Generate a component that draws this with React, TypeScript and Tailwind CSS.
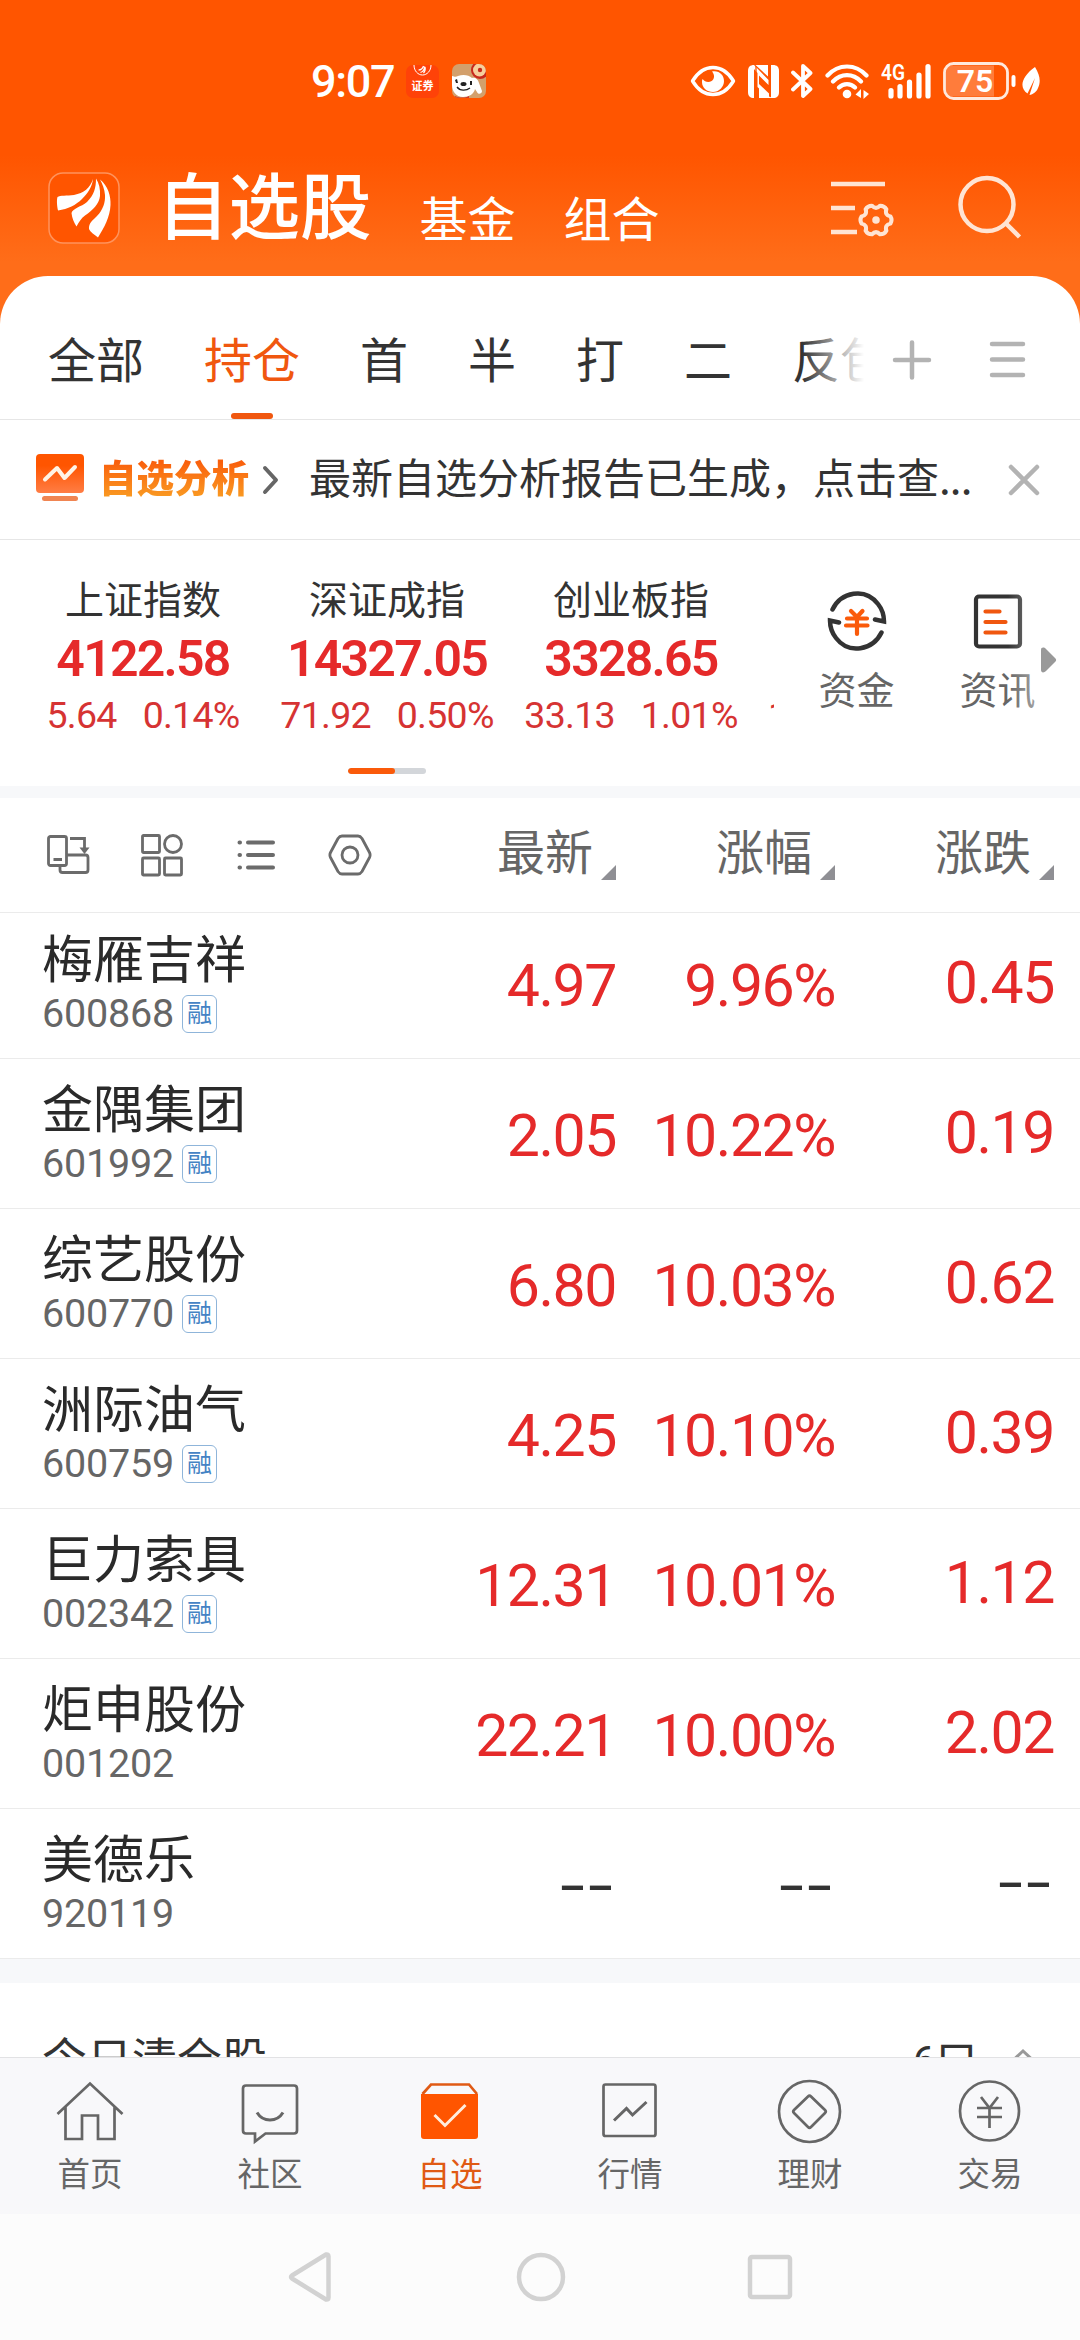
import type { ReactNode } from 'react'

const tabs = ['全部', '持仓', '首', '半', '打', '二', '反包']

const indices = [
    { name: '上证指数', value: '4122.58', change: '5.64', percent: '0.14%' },
    { name: '深证成指', value: '14327.05', change: '71.92', percent: '0.50%' },
    { name: '创业板指', value: '3328.65', change: '33.13', percent: '1.01%' },
]

const stocks = [
    { name: '梅雁吉祥', code: '600868', margin: true, price: '4.97', percent: '9.96%', change: '0.45' },
    { name: '金隅集团', code: '601992', margin: true, price: '2.05', percent: '10.22%', change: '0.19' },
    { name: '综艺股份', code: '600770', margin: true, price: '6.80', percent: '10.03%', change: '0.62' },
    { name: '洲际油气', code: '600759', margin: true, price: '4.25', percent: '10.10%', change: '0.39' },
    { name: '巨力索具', code: '002342', margin: true, price: '12.31', percent: '10.01%', change: '1.12' },
    { name: '炬申股份', code: '001202', margin: false, price: '22.21', percent: '10.00%', change: '2.02' },
    { name: '美德乐', code: '920119', margin: false, price: '--', percent: '--', change: '--' },
]

const StatusBar = () => (
    <div className="flex h-[162px] items-center pl-[311px] pr-10 text-white">
        <span className="w-[83px] font-['Roboto'] text-[45px] leading-none font-medium tracking-[-0.03em]">9:07</span>

        <svg width="33" height="33" viewBox="0 0 33 33" className="ml-3">
            <rect width="33" height="33" rx="7" fill="#ff4208" />
            <path d="M8 0c0 6 4 10 8.500 10S25 6 25 0" fill="none" stroke="#fff" strokeWidth="1" />
            <path d="M12.500 5c2 0 4-1 5-4M14.500 7.500c3-1 4-3 4-6M17.500 8c2-2 2-4 1.500-6" fill="none" stroke="#fff" strokeWidth="1.200" />
            <text x="16.500" y="24.500" textAnchor="middle" fontSize="11" fontWeight="700" fill="#fff" fontFamily="'Noto Sans CJK SC', sans-serif">证券</text>
        </svg>

        <svg width="34" height="34" viewBox="0 0 34 34" className="ml-[13px]">
            <defs>
                <clipPath id="dogClip"><rect width="34" height="34" rx="7" /></clipPath>
            </defs>
            <g clipPath="url(#dogClip)">
                <rect width="34" height="34" fill="#d3a06c" />
                <circle cx="28" cy="6" r="9" fill="#c8281c" />
                <circle cx="27.500" cy="6" r="6.500" fill="#f6cf9c" />
                <circle cx="28" cy="6" r="2.200" fill="#c8281c" />
                <path d="M0 12c3 1 4 1 6 0 5-2 11-1 14 2 3-1 6 1 7 5l3 8c0 3-4 4-5 1l-2-3c-1 5-6 8-12 8C4 33 0 27 0 21z" fill="#fff" />
                <path d="M3 16l2-1 1 4-2 0zM18 17l2 0 0 4-2 0z" fill="#222" />
                <ellipse cx="11.500" cy="20" rx="3" ry="2" fill="#222" />
                <path d="M5 23c3 4 9 4 13 1" fill="none" stroke="#222" strokeWidth="1.300" />
                <path d="M3 32c5 2 10 2 14 0v2H3z" fill="#d0372a" />
            </g>
        </svg>

        <div className="ml-auto flex items-center gap-3">
            <svg width="46" height="34" viewBox="0 0 46 34">
                <path d="M2.500 17C8 8 15 3.500 23 3.500S38 8 43.500 17C38 26 31 30.500 23 30.500S8 26 2.500 17z" fill="none" stroke="#fff" strokeWidth="3.400" strokeLinejoin="round" />
                <path d="M22 7.500c7-1.500 12 3.500 12 9.500S29 28 23 28s-11-4-11-10c0-1 0-2 .6-3 2 3 6 4 9 2s3.400-6 .4-9.500z" fill="#fff" />
            </svg>

            <svg width="31" height="33" viewBox="0 0 31 33" fill="#fff">
                <path d="M6 0v33C2 33 0 31 0 27V6C0 2 2 0 6 0z" />
                <path d="M7.500 0H20v11.500zM11 33h12.500L11 21.500z" />
                <path d="M6 0l14.500 15v5L11 10.500V19l10 9.500V33h2V0h2c4 0 6 2 6 6v21c0 4-2 6-6 6h-4L9.500 22V8L6 4z" fillRule="evenodd" />
                <path d="M8 1v31M22 1v31" stroke="#ff5500" strokeWidth="1.300" />
            </svg>

            <svg width="22" height="36" viewBox="0 0 22 36" fill="none" stroke="#fff" strokeWidth="3.800" strokeLinecap="round" strokeLinejoin="round">
                <path d="M2 9.500L19.500 26 12 33V3l7.500 7L2 26.500" />
            </svg>

            <svg width="44" height="36" viewBox="0 0 44 36" fill="none" stroke="#fff" strokeWidth="4.200" strokeLinecap="round">
                <path d="M2.500 12.500c11-12 28-12 39 0M8 18.500c8-8.500 20-8.500 28 0M14 24.500c4.500-4.500 11.500-4.500 16 0" />
                <circle cx="22" cy="31" r="4.300" fill="#fff" stroke="none" />
                <path d="M30.500 31.500l5.500-5.500v9zM44 31l-5.500 5v-9z" fill="#fff" stroke="none" />
            </svg>

            <svg width="50" height="36" viewBox="0 0 50 36">
                <text x="0" y="17" fontSize="22" fontWeight="600" fill="#fff" fontFamily="Roboto, sans-serif" textLength="24" lengthAdjust="spacingAndGlyphs">4G</text>
                <path d="M10 27.500v5.500M19 23.500v9.500M28.500 19v14M38 12v21M47 3.500v29.500" stroke="#fff" strokeWidth="5.200" strokeLinecap="round" />
            </svg>

            <svg width="97" height="38" viewBox="0 0 97 38">
                <path d="M10 3.500h41v31H10c-4.500 0-7-2.500-7-7v-17c0-4.500 2.500-7 7-7z" fill="#fff" fillOpacity=".23" />
                <rect x="1.500" y="1.500" width="63" height="35" rx="9" fill="none" stroke="#ffe9dd" strokeWidth="2.800" />
                <path d="M70.500 15v8" stroke="#fff" strokeWidth="4" strokeLinecap="round" />
                <text x="32" y="30.300" textAnchor="middle" fontSize="32" fontWeight="600" fill="#fff" fontFamily="Roboto, sans-serif">75</text>
                <path d="M92 5c5 8 6 15 3 21-1.500 4-5 6.500-8.500 7l5.500-17-7.500 15.500C76 26 78 15 92 5z" fill="#fff" />
            </svg>
        </div>
    </div>
)

const TitleBar = () => (
    <div className="flex h-[162px] items-start pl-12 pr-[56px] text-white">
        <svg width="72" height="72" viewBox="0 0 72 72" className="mt-[10px]">
            <rect x="1" y="1" width="70" height="70" rx="14" fill="#ff5500" stroke="#ff935c" strokeWidth="1.500" />
            <g fill="#fff">
                <path d="M45 7C42 16 36 21 26 23C19 24 12 23 9.500 25C8.500 28 9 34 10 38.500C20 37 28 33 34 27C40 21 44 15 45 7Z" />
                <path d="M48 6.500C48 16 46 23 39 30C33 35 25 36 23.500 41C24 46 26 51 28.500 54.500C31 50 33 46.500 37 43.500C45 38 51 32 52 24C52.500 17 51 11 48 6.500Z" />
                <path d="M52 7.500C60 14 63 24 62.500 33C62 45 56 56 50 65.500C47 63 42 60 41 57C40.500 51 45 48 49 44C55 38 57.500 30 57 23C56.500 17 54.500 12 52 7.500Z" />
            </g>
        </svg>
        <h1 className="mt-[5px] ml-[37px] text-[71.500px] leading-none font-medium">自选股</h1>
        <span className="mt-[30px] ml-[48px] text-5xl leading-none">基金</span>
        <span className="mt-[30px] ml-12 text-5xl leading-none">组合</span>

        <svg width="64" height="60" viewBox="0 0 64 60" className="mt-[18px] ml-auto" fill="none" stroke="#ffe4d3" strokeWidth="4.500">
            <path d="M0 4h54M0 28h24M0 52h26" />
            <g transform="translate(45 40) scale(.9)">
                <path
                    d="M16 -4Q9.500 -5.500 11.500 -11.900Q9.250 -16 4.500 -15.900Q0 -11 -4.500 -15.900Q-9.250 -16 -11.500 -11.900Q-9.500 -5.500 -16 -4Q-18.500 0 -16 4Q-9.500 5.500 -11.500 11.900Q-9.250 16 -4.500 15.900Q0 11 4.500 15.900Q9.250 16 11.500 11.900Q9.500 5.500 16 4Q18.500 0 16 -4Z"
                    strokeLinejoin="round"
                />
                <circle r="4.200" fill="#ffe4d3" stroke="none" />
            </g>
        </svg>
        <svg width="66" height="66" viewBox="0 0 66 66" className="mt-[13px] ml-[63px]" fill="none" stroke="#ffe4d3" strokeWidth="4.500">
            <circle cx="29" cy="29.500" r="26.500" />
            <path d="M48 48.500L61.500 62" />
        </svg>
    </div>
)

const GroupTabs = () => (
    <div className="flex h-36 border-b border-[#e6e6e6]">
        <div className="relative flex w-[864px] gap-[60px] overflow-hidden pt-[57px] pl-12 whitespace-nowrap">
            {tabs.map((tab, i) => (
                <div key={tab} className="flex shrink-0 flex-col items-center">
                    <span className={`text-5xl leading-none ${i === 1 ? 'text-[#f0570f]' : 'text-[#333]'}`}>{tab}</span>
                    {i === 1 && <span className="mt-8 h-[6px] w-[42px] rounded-full bg-[#f0570f]" />}
                </div>
            ))}
            <div className="absolute inset-y-0 right-0 w-[62px] bg-gradient-to-r from-white/0 to-white" />
        </div>
        <svg width="40" height="40" viewBox="0 0 40 40" className="mt-[64px] ml-7" stroke="#b3b3b3" strokeWidth="4.500" strokeLinecap="round">
            <path d="M3 20h34M20 2.500v35" />
        </svg>
        <svg width="38" height="40" viewBox="0 0 38 40" className="mt-[63px] ml-[57px]" stroke="#b3b3b3" strokeWidth="4.500" strokeLinecap="round">
            <path d="M3 5h31M3 20.500h31M3 36h31" />
        </svg>
    </div>
)

const ReportBar = () => (
    <div className="flex h-[120px] items-center border-b border-[#e6e6e6] pl-9">
        <svg width="48" height="48" viewBox="0 0 48 48" className="mb-1">
            <defs>
                <linearGradient id="reportFill" x1="0" y1="0" x2="0" y2="1">
                    <stop offset=".3" stopColor="#ff5500" />
                    <stop offset="1" stopColor="#ff7d45" />
                </linearGradient>
            </defs>
            <rect width="48" height="39" rx="4" fill="url(#reportFill)" />
            <path d="M9 25.500l12-11.500 7.500 10L39 13" fill="none" stroke="#fff4e6" strokeWidth="4" strokeLinecap="round" strokeLinejoin="round" />
            <rect x="6" y="42" width="36" height="5" rx="2.500" fill="#f08552" />
        </svg>
        <span className="mb-2 ml-[15px] bg-gradient-to-b from-[#f95f0c] from-20% to-[#f99a22] bg-clip-text text-[37.500px] leading-[1.2] font-black text-transparent">
            自选分析
        </span>
        <svg width="18" height="30" viewBox="0 0 18 30" className="ml-[13px]" fill="none" stroke="#666" strokeWidth="4" strokeLinecap="round" strokeLinejoin="round">
            <path d="M3 3l11 12L3 27" />
        </svg>
        <p className="mb-2 ml-[29px] text-[42px] leading-none whitespace-nowrap text-[#333]">
            最新自选分析报告已生成，点击查<span className="tracking-[-0.02em]">...</span>
        </p>
        <svg width="32" height="32" viewBox="0 0 32 32" className="mr-10 ml-auto" stroke="#b3b3b3" strokeWidth="4.500" strokeLinecap="round">
            <path d="M3 3l26 26M29 3L3 29" />
        </svg>
    </div>
)

const IndexPanel = () => (
    <div className="flex h-[246px]">
        <div className="w-[774px] overflow-hidden pt-[38px]">
            <div className="flex pl-[21px]">
                {indices.map(item => (
                    <div key={item.name} className="flex w-[244px] shrink-0 flex-col items-center">
                        <span className="text-[39px] leading-none text-[#333]">{item.name}</span>
                        <span className="mt-[17px] font-['Roboto'] text-[50px] leading-none font-semibold tracking-[-0.035em] text-[#e52a2a]">
                            {item.value}
                        </span>
                        <div className="mt-3 flex gap-[26px] font-['Roboto'] text-[37.500px] leading-[38px] tracking-[-0.02em] text-[#d63333]">
                            <span>{item.change}</span>
                            <span>{item.percent}</span>
                        </div>
                    </div>
                ))}
                {/* следующий индекс, почти полностью обрезан */}
                <div className="flex w-[244px] shrink-0 flex-col justify-end pl-[15px]">
                    <span className="font-['Roboto'] text-[37.500px] leading-[38px] text-[#d63333]">1</span>
                </div>
            </div>
            <div className="mx-auto mt-[34px] h-[6px] w-[78px] overflow-hidden rounded-full bg-[#d3d6da]">
                <div className="h-full w-[47px] rounded-full bg-[#fa5a0a]" />
            </div>
        </div>

        <div className="relative ml-[12px] flex flex-1 pt-[51px]">
            <div className="flex w-[141px] flex-col items-center">
                <svg width="60" height="60" viewBox="0 0 60 60" fill="none" stroke="#333" strokeWidth="4.500" strokeLinecap="round">
                    <path d="M5.500 18.500C14 1 38-4 51 13c4 5 6 11 6 17.500l-9-2" />
                    <path d="M54.500 41.500C46 59 22 64 9 47 5 42 3 36 3 29.500l9 2" />
                    <path d="M24 20l6 6 5.500-6M20 27.500h20M19 34.500h21.500M30 26v17" stroke="#fa5a0a" strokeWidth="4.200" />
                </svg>
                <span className="mt-[18px] text-[38px] leading-none text-[#666]">资金</span>
            </div>
            <div className="flex w-[141px] flex-col items-center">
                <svg width="60" height="60" viewBox="0 0 60 60" fill="none" stroke="#333" strokeWidth="4.200" strokeLinecap="round">
                    <rect x="8" y="5.500" width="44" height="50" rx="3" />
                    <path d="M17.500 20.500h14M17.500 31h20M17.500 41.500h20" stroke="#f0570f" />
                </svg>
                <span className="mt-[18px] text-[38px] leading-none text-[#666]">资讯</span>
            </div>
            <div className="absolute inset-y-0 right-0 w-[72px] bg-gradient-to-r from-white/0 to-white/80 to-80%" />
            <svg width="16" height="26" viewBox="0 0 16 26" className="absolute top-[107px] right-[23px]">
                <path d="M0 3c0-3 3-3 5-1l9 9c1.500 1.500 1.500 2.500 0 4l-9 9c-2 2-5 2-5-1z" fill="#999" />
            </svg>
        </div>
    </div>
)

const SortHeader = ({ label }: { label: string }) => (
    <div className="flex w-[219px] items-end justify-end gap-2">
        <span className="mb-[7px] text-5xl leading-none text-[#666]">{label}</span>
        <svg width="15" height="15" viewBox="0 0 15 15">
            <path d="M15 0v15H0z" fill="#8f8f94" />
        </svg>
    </div>
)

const TableHeader = () => (
    <div className="flex h-[115px] items-center border-b border-[#ebebeb] pr-[26px] pl-[46px]">
        <div className="flex flex-1 items-center">
            <svg width="44" height="42" viewBox="0 0 44 42" fill="none" stroke="#6b6b6b" strokeWidth="2.800">
                <rect x="2.500" y="2.500" width="18" height="29" rx="2" />
                <path d="M7.500 25.500h8.500M24 4.500h14.500V14" />
                <path d="M33.500 13.500h10l-5 6.500z" fill="#6b6b6b" stroke="none" />
                <path d="M21 21h18.500c1.500 0 2.500 1 2.500 2.500v12.500c0 1.500-1 2.500-2.500 2.500h-23c-1.500 0-2.500-1-2.500-2.500V32" />
            </svg>
            <svg width="44" height="44" viewBox="0 0 44 44" className="ml-[50px]" fill="none" stroke="#6b6b6b" strokeWidth="2.800">
                <rect x="2.500" y="2.500" width="17" height="17" rx="1" />
                <circle cx="33" cy="11" r="8.500" />
                <rect x="2.500" y="25" width="17" height="17" rx="1" />
                <rect x="24.500" y="25" width="17" height="17" rx="1" />
            </svg>
            <svg width="40" height="34" viewBox="0 0 40 34" className="ml-[52px]" stroke="#6b6b6b" strokeWidth="4" strokeLinecap="round">
                <path d="M3.500 4.500h.5M3.500 17h.5M3.500 29.500h.5M12 4.500h25M12 17h25M12 29.500h25" />
            </svg>
            <svg width="44" height="42" viewBox="0 0 44 42" className="ml-[52px]" fill="none" stroke="#6b6b6b" strokeWidth="2.800" strokeLinejoin="round">
                <path d="M14 2h16c2 0 3 1 4 2.500l7.500 14c1 2 1 3 0 5l-7.500 14C33 39 32 40 30 40H14c-2 0-3-1-4-2.500l-7.500-14c-1-2-1-3 0-5l7.500-14C11 3 12 2 14 2z" />
                <circle cx="22" cy="21" r="8" />
            </svg>
        </div>
        <div className="flex h-[50px]">
            <SortHeader label="最新" />
            <SortHeader label="涨幅" />
            <SortHeader label="涨跌" />
        </div>
    </div>
)

const Quote = ({ value, className = '' }: { value: string; className?: string }) => (
    <span className={`flex w-[219px] justify-end font-['Roboto'] text-[59px] leading-none ${className}`}>
        {value === '--' ? (
            <span className="origin-right scale-x-150 tracking-[0.04em] text-[#333]">--</span>
        ) : (
            <span className="tracking-[-0.025em] text-[#e52a2a]">{value}</span>
        )}
    </span>
)

const StockRow = ({ stock, first }: { stock: (typeof stocks)[number]; first: boolean }) => (
    <div className={`flex items-end border-b border-[#ebebeb] pr-[26px] pl-[42px] ${first ? 'h-[146px]' : 'h-[150px]'}`}>
        <div className="flex flex-1 flex-col pb-[25px]">
            <span className="text-[51px] leading-none text-[#2a2a2a]">{stock.name}</span>
            <div className="mt-[13px] flex h-[38px] items-center">
                <span className="font-['Roboto'] text-[39.500px] leading-none tracking-[-0.005em] text-[#666]">{stock.code}</span>
                {stock.margin && (
                    <span className="ml-[8px] flex h-[38px] w-[35px] items-start justify-center rounded-[6px] border border-[#8fb5da] pt-[3px] text-[25px] leading-none text-[#4583c4]">
                        融
                    </span>
                )}
            </div>
        </div>
        <Quote value={stock.price} className="pb-[43px]" />
        <Quote value={stock.percent} className="pb-[43px]" />
        <Quote value={stock.change} className="pb-[46px]" />
    </div>
)

const NavItem = ({ label, active, children }: { label: string; active?: boolean; children: ReactNode }) => (
    <div className={`flex flex-1 flex-col items-center pt-[21px] ${active ? 'text-[#e05a14]' : 'text-[#666]'}`}>
        <svg width="68" height="66" viewBox="0 0 68 66" fill="none" stroke="currentColor" strokeWidth="2.700">
            {children}
        </svg>
        <span className="mt-[11px] text-[32.500px] leading-none">{label}</span>
    </div>
)

const BottomNav = () => (
    <nav className="flex h-[157px] shrink-0 border-t border-[#e2e2e4] bg-[#f8f8fa]">
        <NavItem label="首页">
            <path d="M1.500 35L34 4.500 66.500 35M9.500 28v32H26V36.500h16V60h16.500V28" />
        </NavItem>
        <NavItem label="社区">
            <path d="M10 6.500h48q3 0 3 3v42q0 3-3 3H29.500L19 62.500V54.500h-9q-3 0-3-3v-42q0-3 3-3z" />
            <path d="M21 33.500c6 10 20 10 26 0" strokeWidth="3" />
        </NavItem>
        <NavItem label="自选" active>
            <path d="M5 15v42q0 3 3 3h51q3 0 3-3V15z" fill="#ff5500" stroke="none" />
            <path d="M6.500 15L15 5.500h38L61 15" />
            <path d="M18.500 36l10.500 10.500L49.500 26" stroke="#ffeedd" strokeWidth="3" />
        </NavItem>
        <NavItem label="行情">
            <rect x="7.500" y="5.500" width="52" height="51.500" rx="2" />
            <path d="M18 41.500L30.500 29.500l6 6.500L50.500 23" strokeWidth="3" />
        </NavItem>
        <NavItem label="理财">
            <circle cx="33.500" cy="32.500" r="30.500" />
            <path d="M32 17.500q1.500-1.500 3 0L49 31q1.500 1.500 0 3L35 48q-1.500 1.500-3 0L18 34q-1.500-1.500 0-3z" />
        </NavItem>
        <NavItem label="交易">
            <circle cx="33.500" cy="32" r="29.500" />
            <path d="M25 18l8.500 11L42 18M21 29h25M21 38h25M33.500 29v20" />
        </NavItem>
    </nav>
)

const SystemNav = () => (
    <div className="flex h-[126px] shrink-0 items-center justify-center bg-[#fcfcfc]">
        <div className="flex items-center">
            <svg width="46" height="52" viewBox="0 0 46 52" fill="none" stroke="#d2d2d2" strokeWidth="4.500" strokeLinejoin="round">
                <path d="M4 24.500L38 3.500q2.500-.5 2.500 2v41q0 2.500-2.500 2L4 27.500q-2-1.500 0-3z" />
            </svg>
            <svg width="52" height="52" viewBox="0 0 52 52" className="ml-[181px]" fill="none" stroke="#d2d2d2" strokeWidth="4.500">
                <circle cx="26" cy="26" r="22" />
            </svg>
            <svg width="46" height="46" viewBox="0 0 46 46" className="ml-[180px]" fill="none" stroke="#d2d2d2" strokeWidth="4.500">
                <rect x="3" y="3" width="40" height="40" rx="2" />
            </svg>
        </div>
    </div>
)

export default function App() {
    return (
        <div className="flex h-[2340px] w-[1080px] flex-col overflow-hidden bg-white font-['Noto_Sans_CJK_SC',sans-serif]">
            <header className="shrink-0 bg-linear-[180deg,#ff5500_0px,#ff5500_155px,#ff6d19_262px,#ff6d19_324px]">
                <StatusBar />
                <TitleBar />
            </header>

            <main className="-mt-12 flex-1 overflow-hidden rounded-t-[48px] bg-white">
                <GroupTabs />
                <ReportBar />
                <IndexPanel />
                <div className="h-3 bg-[#f7f8fa]" />
                <TableHeader />
                {stocks.map((stock, i) => (
                    <StockRow key={stock.code} stock={stock} first={i === 0} />
                ))}
                <div className="h-6 bg-[#f7f8fa]" />
                <div className="flex h-[150px] items-center pr-[40px] pl-[42px] text-[45px] leading-none text-[#333]">
                    <span className="mb-1 flex-1">今日清仓股</span>
                    <span className="mt-[7px] -mr-[2px] font-['Roboto'] text-[42px]">6</span>
                    <span className="mt-1">只</span>
                    <svg width="34" height="20" viewBox="0 0 34 20" className="ml-[27px]" fill="none" stroke="#999" strokeWidth="3">
                        <path d="M3 16L17 3l14 13" />
                    </svg>
                </div>
            </main>

            <BottomNav />
            <SystemNav />
        </div>
    )
}
